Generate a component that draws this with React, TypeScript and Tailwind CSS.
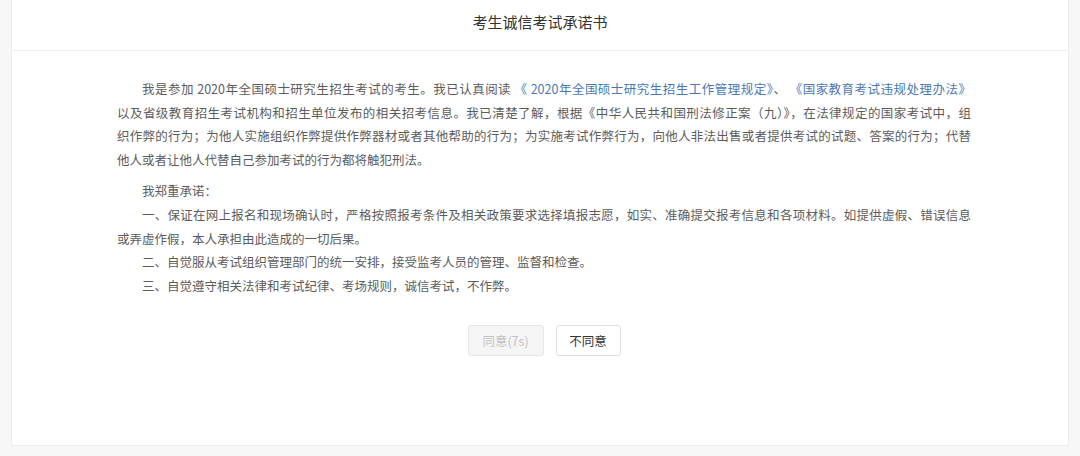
import React from "react";

const FONT = { fontFamily: '"Noto Sans CJK SC", "Noto Sans", sans-serif' };

function Line({ children, indent = false, full = true }: { children: React.ReactNode; indent?: boolean; full?: boolean }) {
  return (
    <div
      className={
        "whitespace-nowrap " +
        (indent ? "pl-[25px] " : "") +
        (full ? "text-justify [text-align-last:justify]" : "text-left")
      }
    >
      {children}
    </div>
  );
}

export default function App() {
  return (
    <div className="w-[1080px] h-[456px] bg-[#f7f7f8] px-[11px] overflow-hidden" style={FONT}>
      <div className="h-[446px] bg-white border-x border-b border-[#ededed] flex flex-col">
        <div className="h-[51px] border-b border-[#eeeeee] flex items-center justify-center pb-[6px]">
          <span className="text-[15px] text-[#333333]">考生诚信考试承诺书</span>
        </div>
        <div className="pl-[105px] pr-[97px] pt-[26px] text-[12.5px] leading-[23.6px] text-[#5c5c5c]">
          <div>
            <Line indent>
              我是参加 2020年全国硕士研究生招生考试的考生。我已认真阅读{" "}
              <span className="text-[#4a78b3]">《 2020年全国硕士研究生招生工作管理规定》</span>、{" "}
              <span className="text-[#4a78b3]">《国家教育考试违规处理办法》</span>
            </Line>
            <Line>
              以及省级教育招生考试机构和招生单位发布的相关招考信息。我已清楚了解，根据《中华人民共和国刑法修正案（九）》，在法律规定的国家考试中，组
            </Line>
            <Line>
              织作弊的行为；为他人实施组织作弊提供作弊器材或者其他帮助的行为；为实施考试作弊行为，向他人非法出售或者提供考试的试题、答案的行为；代替
            </Line>
            <Line full={false}>他人或者让他人代替自己参加考试的行为都将触犯刑法。</Line>
          </div>
          <div className="mt-[8px]">
            <Line indent full={false}>
              我郑重承诺：
            </Line>
            <Line indent>
              一、保证在网上报名和现场确认时，严格按照报考条件及相关政策要求选择填报志愿，如实、准确提交报考信息和各项材料。如提供虚假、错误信息
            </Line>
            <Line full={false}>或弄虚作假，本人承担由此造成的一切后果。</Line>
            <Line indent full={false}>
              二、自觉服从考试组织管理部门的统一安排，接受监考人员的管理、监督和检查。
            </Line>
            <Line indent full={false}>
              三、自觉遵守相关法律和考试纪律、考场规则，诚信考试，不作弊。
            </Line>
          </div>
          <div className="mt-[28px] flex justify-center gap-[12px] pr-[0px]">
            <button
              disabled
              className="w-[76px] h-[31px] rounded-[3px] border border-[#e6e6e6] bg-[#f5f5f6] text-[#c2c2c2] text-[12.5px]"
              style={FONT}
            >
              同意(7s)
            </button>
            <button
              className="w-[65px] h-[31px] rounded-[3px] border border-[#dedede] bg-white text-[#333333] text-[12.5px]"
              style={FONT}
            >
              不同意
            </button>
          </div>
        </div>
      </div>
    </div>
  );
}
